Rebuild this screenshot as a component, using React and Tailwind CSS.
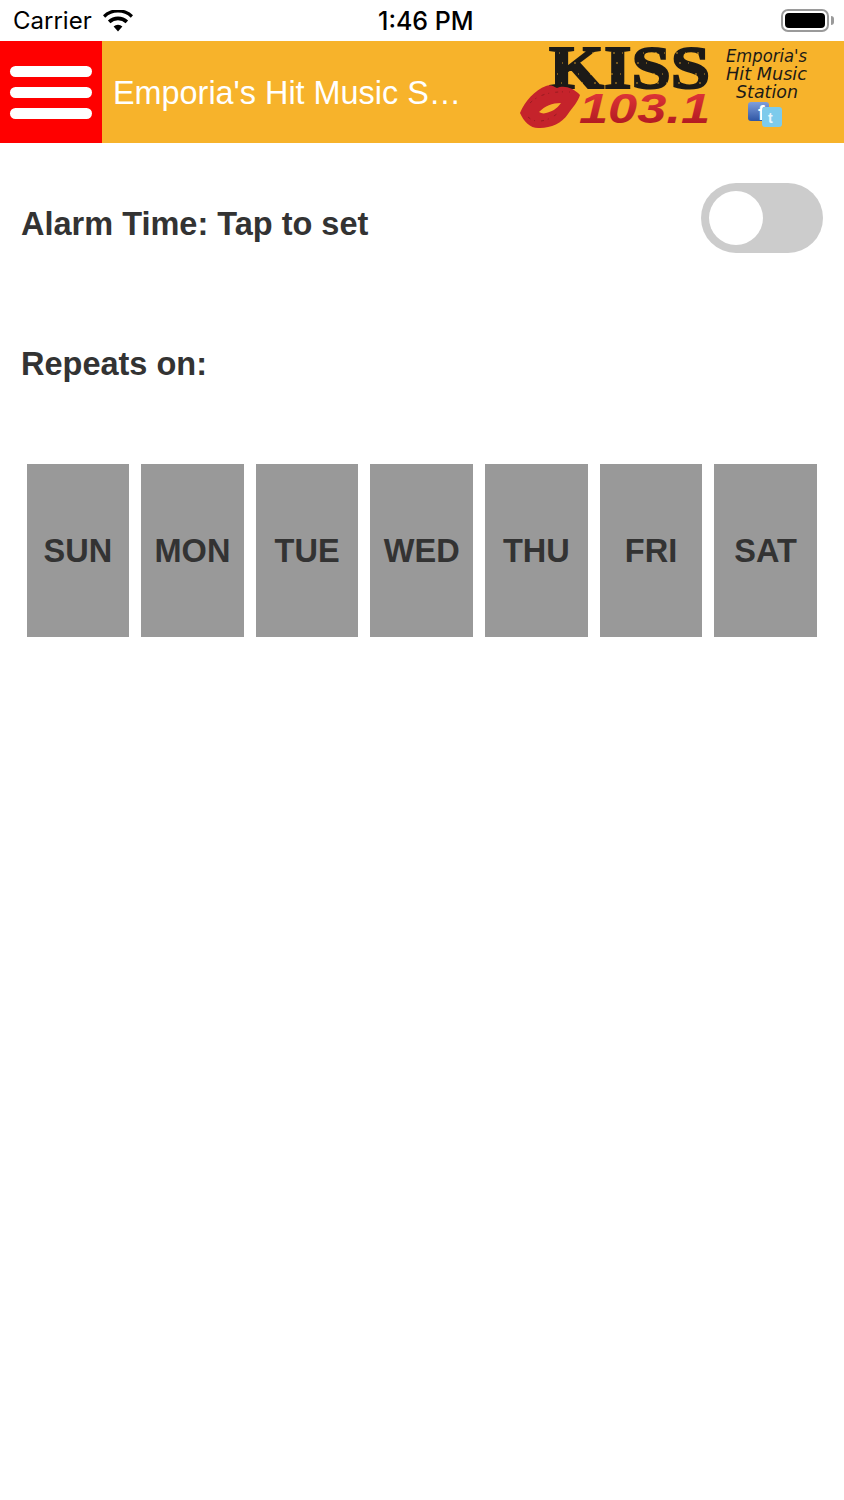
const days = ['SUN', 'MON', 'TUE', 'WED', 'THU', 'FRI', 'SAT'];

const WifiIcon = () => (
  <svg width="30" height="22" viewBox="0 0 30 22" className="ml-[11px]">
    <path d="M15 21.5 10.6 16.6a6.4 6.4 0 0 1 8.8 0Z" fill="#000" />
    <path d="M7.4 13.2a11 11 0 0 1 15.2 0l2.5-2.7a14.8 14.8 0 0 0-20.2 0Z" fill="#000" />
    <path d="M2.2 7.7a18.6 18.6 0 0 1 25.6 0l2.2-2.5a22 22 0 0 0-30 0Z" fill="#000" />
  </svg>
);

const BatteryIcon = () => (
  <div className="flex items-center">
    <div className="w-[48px] h-[23px] rounded-[7px] border-2 border-[#9a9a9a] p-[2px]">
      <div className="w-full h-full rounded-[4px] bg-black" />
    </div>
    <div className="ml-[2px] w-[3px] h-[9px] rounded-r-full bg-[#9a9a9a]" />
  </div>
);

const KissLogo = () => (
  <svg width="344" height="102" viewBox="0 0 344 102" overflow="visible" className="shrink-0">
    <defs>
      <linearGradient id="red" x1="0" y1="0" x2="0" y2="1">
        <stop offset="0" stopColor="#ea3a3c" />
        <stop offset="1" stopColor="#a5141c" />
      </linearGradient>
      <linearGradient id="fb" x1="0" y1="0" x2="0" y2="1">
        <stop offset="0" stopColor="#7f9fdc" />
        <stop offset="1" stopColor="#2f55a4" />
      </linearGradient>
    </defs>
    <text
      x="49"
      y="47"
      textLength="161"
      lengthAdjust="spacingAndGlyphs"
      fontFamily="'Liberation Serif', serif"
      fontWeight="700"
      fontSize="62"
      fill="#1c1a17"
      stroke="#1c1a17"
      strokeWidth="2"
    >
      KISS
    </text>
    {/* worn print texture on KISS */}
    <g stroke="#f7b32b" strokeWidth="1" strokeDasharray="2 7 1 11" fill="none" opacity="0.8">
      <path d="M50 12H210" />
      <path d="M53 22H208" />
      <path d="M48 33H209" />
      <path d="M52 42H210" />
    </g>
    {/* lips */}
    <path
      d="M20 72C25 60 35 49 46 45C51 43 54 46 57 47C63 44 73 46 80 54C78 61 72 67 68 73C62 82 51 87 40 87C31 88 24 81 20 72Z"
      fill="#c5232b"
    />
    <path d="M39 71C45 65 52 62 61 62C57 68 51 71 46 72C43 73 41 72 39 71Z" fill="#f7b32b" />
    <g stroke="#8f1a1f" strokeWidth="1" strokeDasharray="3 4 1 6" fill="none" opacity="0.8">
      <path d="M30 62C38 54 50 50 70 51" />
      <path d="M28 76C34 82 46 82 58 72" />
    </g>
    <text
      x="79"
      y="82"
      textLength="131"
      lengthAdjust="spacingAndGlyphs"
      fontFamily="'Liberation Sans', sans-serif"
      fontWeight="700"
      fontStyle="italic"
      fontSize="42"
      fill="url(#red)"
    >
      103.1
    </text>
    <g fontFamily="'DejaVu Sans', sans-serif" fontStyle="italic" fontSize="17" fill="#1c1a17">
      <text x="226" y="21" textLength="81" lengthAdjust="spacingAndGlyphs">Emporia's</text>
      <text x="226" y="39" textLength="81" lengthAdjust="spacingAndGlyphs">Hit Music</text>
      <text x="236" y="57" textLength="62" lengthAdjust="spacingAndGlyphs">Station</text>
    </g>
    {/* facebook + twitter badges */}
    <rect x="248" y="61" width="21" height="19" rx="3" fill="url(#fb)" />
    <text x="258" y="79" fontFamily="'Liberation Sans', sans-serif" fontWeight="700" fontSize="20" fill="#fff">f</text>
    <rect x="262" y="66" width="20" height="20" rx="3" fill="#7ccbec" />
    <text x="268" y="82" fontFamily="'Liberation Sans', sans-serif" fontWeight="700" fontSize="14" fill="#e8f7fd">t</text>
  </svg>
);

export default function App() {
  return (
    <div className="w-[844px] min-h-[1500px] bg-white font-['Liberation_Sans',sans-serif]">
      {/* Status bar */}
      <div className="h-[41px] relative flex items-center justify-between pl-[13px] pr-[10px] text-black font-['Inter',sans-serif]">
        <div className="flex items-center">
          <span className="text-[24px] leading-none">Carrier</span>
          <WifiIcon />
        </div>
        <span className="absolute left-[378px] top-[9px] text-[25px] leading-none font-medium">1:46 PM</span>
        <BatteryIcon />
      </div>

      {/* Header */}
      <header className="h-[102px] flex bg-[#f7b32b]">
        <div className="w-[102px] shrink-0 bg-[#ff0000] flex flex-col items-center justify-center gap-[10px]">
          <span className="block w-[82px] h-[11px] rounded-full bg-white" />
          <span className="block w-[82px] h-[11px] rounded-full bg-white" />
          <span className="block w-[82px] h-[11px] rounded-full bg-white" />
        </div>
        <div className="w-[398px] shrink-0 pl-[11px] pt-[2px] flex items-center text-white text-[32.4px] leading-none whitespace-nowrap">
          Emporia's Hit Music S…
        </div>
        <KissLogo />
      </header>

      {/* Alarm */}
      <div className="pt-[40px] pl-[21px] pr-[21px] flex items-start justify-between">
        <span className="mt-[23px] text-[32.5px] leading-[37px] font-bold text-[#333333]">Alarm Time: Tap to set</span>
        <div className="w-[122px] h-[70px] rounded-full bg-[#cccccc] p-[8px]">
          <div className="w-[54px] h-[54px] rounded-full bg-white" />
        </div>
      </div>

      <div className="mt-[93px] pl-[21px] text-[32.5px] leading-[37px] font-bold text-[#333333]">Repeats on:</div>

      {/* Day buttons */}
      <div className="mt-[81px] pl-[26.5px] pr-[27px] flex gap-[12px]">
        {days.map((day) => (
          <div
            key={day}
            className="flex-1 h-[173px] pt-[2px] bg-[#999999] flex items-center justify-center text-[32.5px] font-bold text-[#333333]"
          >
            {day}
          </div>
        ))}
      </div>
    </div>
  );
}
